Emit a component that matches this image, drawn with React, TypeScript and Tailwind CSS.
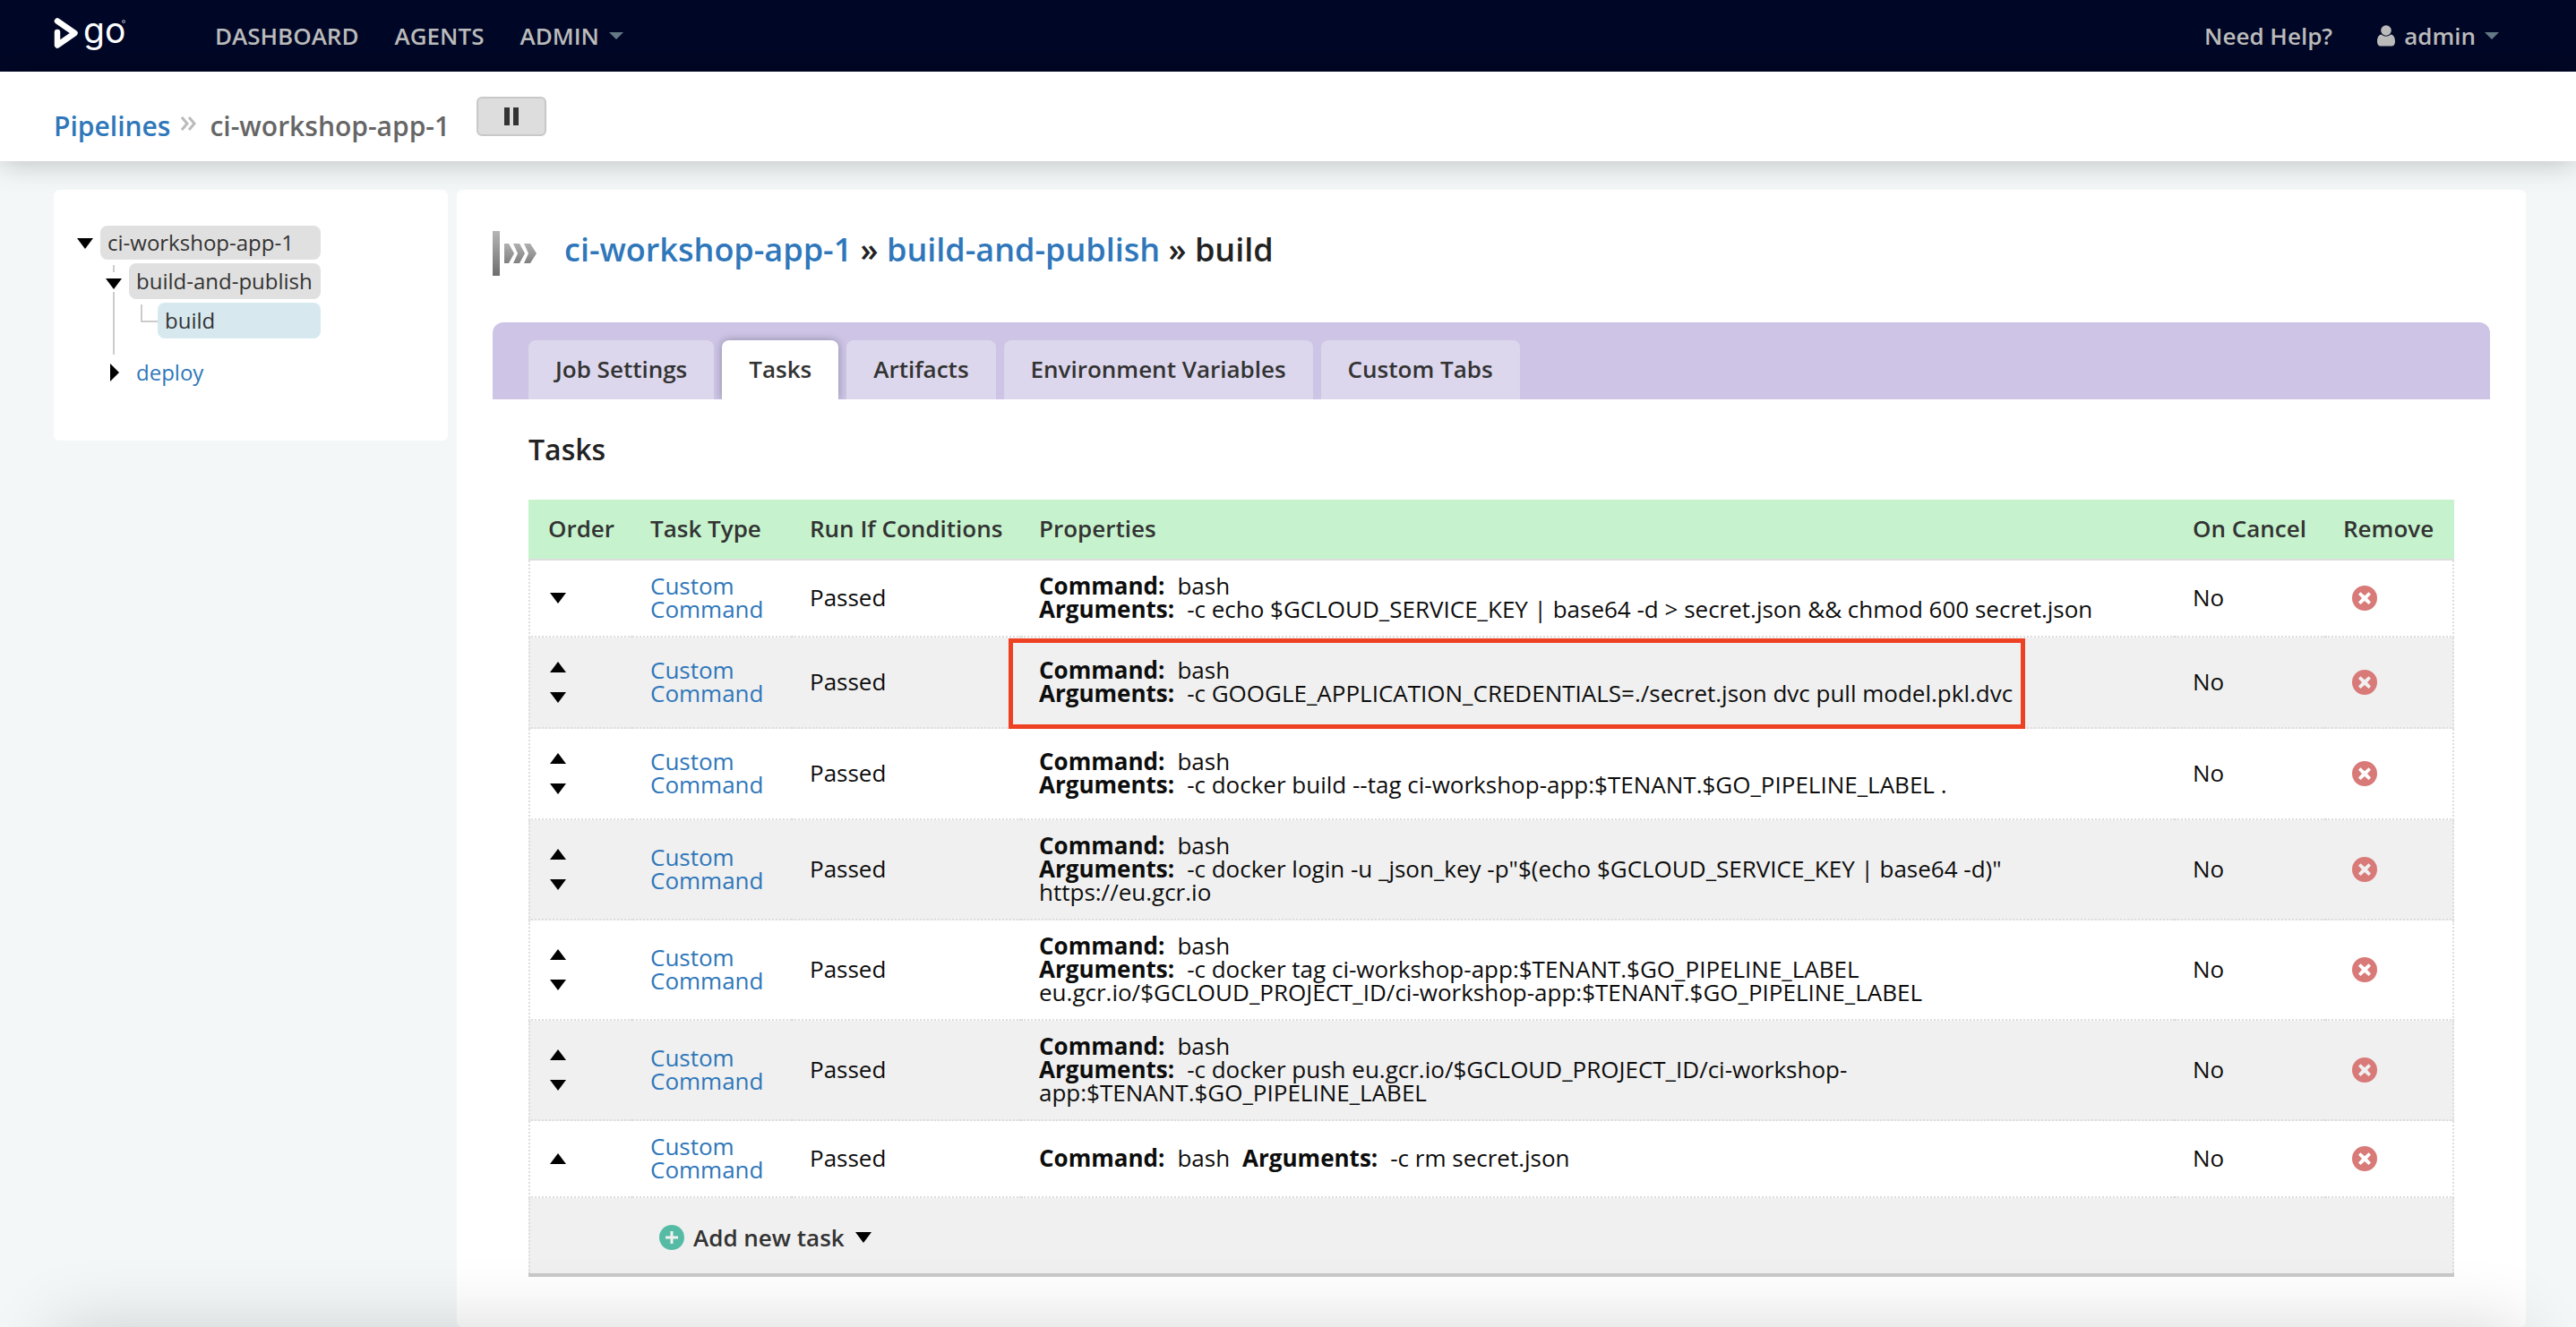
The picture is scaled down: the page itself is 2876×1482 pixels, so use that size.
import React from "react";

type Direction = "up" | "down" | "right";

const caretPoints: Record<Direction, string> = {
  up: "0,12 10,0 20,12",
  down: "0,0 20,0 10,12",
  right: "0,0 12,10 0,20",
};

function Caret({ dir, className }: { dir: Direction; className: string }) {
  return (
    <svg
      viewBox={dir === "right" ? "0 0 12 20" : "0 0 20 12"}
      preserveAspectRatio="none"
      className={className}
      fill="currentColor"
      aria-hidden="true"
    >
      <polygon points={caretPoints[dir]} />
    </svg>
  );
}

function Logo() {
  return (
    <svg viewBox="0 -8 84 60" className="h-[60px] w-[84px]" role="img" aria-label="go">
      <path
        d="M4 5.500 L23.500 19 L4 32.500 V18"
        fill="none"
        stroke="#fff"
        strokeWidth="6.500"
        strokeLinecap="round"
        strokeLinejoin="round"
      />
      <text x="33" y="30" fill="#fff" fontSize="39" fontWeight="400" fontFamily="Inter, sans-serif">
        go
      </text>
      <circle cx="78" cy="6" r="1.5" fill="none" stroke="#aab" strokeWidth="1" />
    </svg>
  );
}

function UserIcon() {
  return (
    <svg viewBox="0 0 20 24" className="h-6 w-5" fill="currentColor" aria-hidden="true">
      <circle cx="10" cy="6" r="5.8" />
      <path d="M5 10.5 C7.5 13.2 12.5 13.2 15 10.5 C18.5 11 20 14 20 18.500 C20 21.500 18.500 23.500 16 23.500 H4 C1.500 23.500 0 21.500 0 18.500 C0 14 1.500 11 5 10.500 Z" />
    </svg>
  );
}

function JobIcon() {
  return (
    <svg viewBox="0 0 50 52" className="h-[52px] w-[50px]" aria-hidden="true">
      <defs>
        <linearGradient id="jobBar" x1="0" y1="0" x2="0" y2="1">
          <stop offset="0" stopColor="#b5b5b5" />
          <stop offset="1" stopColor="#6e6e6e" />
        </linearGradient>
        <linearGradient id="jobArrow" x1="0" y1="0" x2="0" y2="1">
          <stop offset="0" stopColor="#b0b0b0" />
          <stop offset="1" stopColor="#808080" />
        </linearGradient>
      </defs>
      <rect x="0" y="1" width="8" height="50" fill="url(#jobBar)" />
      <g fill="url(#jobArrow)">
        <path d="M13 15 H18 L24 26 L18 37 H13 Z" />
        <path d="M23 15 H30 L36 26 L30 37 H23 L28 26 Z" />
        <path d="M35 15 H42 L49 26 L42 37 H35 L40 26 Z" />
      </g>
    </svg>
  );
}

function RemoveIcon() {
  return (
    <svg viewBox="0 0 28 28" className="h-7 w-7" aria-hidden="true">
      <path
        fill="#d87a78"
        fillRule="evenodd"
        d="M14 0a14 14 0 1 0 0 28a14 14 0 1 0 0-28ZM9.500 7.200L14 11.200L18.500 7.200L21 9.700L17 14L21 18.500L18.500 21L14 17L9.500 21L7 18.500L11 14L7 9.700Z"
      />
    </svg>
  );
}

function AddIcon() {
  return (
    <svg viewBox="0 0 28 28" className="h-7 w-7" aria-hidden="true">
      <circle cx="14" cy="14" r="14" fill="#56bba4" />
      <path d="M14 7 V21 M7 14 H21" stroke="#f0f0f0" strokeWidth="3" fill="none" />
    </svg>
  );
}

interface Task {
  up: boolean;
  down: boolean;
  args: string;
  inline?: boolean;
  highlight?: boolean;
}

const tasks: Task[] = [
  {
    up: false,
    down: true,
    args: "-c echo $GCLOUD_SERVICE_KEY | base64 -d > secret.json && chmod 600 secret.json",
  },
  {
    up: true,
    down: true,
    args: "-c GOOGLE_APPLICATION_CREDENTIALS=./secret.json dvc pull model.pkl.dvc",
    highlight: true,
  },
  {
    up: true,
    down: true,
    args: "-c docker build --tag ci-workshop-app:$TENANT.$GO_PIPELINE_LABEL .",
  },
  {
    up: true,
    down: true,
    args: '-c docker login -u _json_key -p"$(echo $GCLOUD_SERVICE_KEY | base64 -d)" https://eu.gcr.io',
  },
  {
    up: true,
    down: true,
    args: "-c docker tag ci-workshop-app:$TENANT.$GO_PIPELINE_LABEL eu.gcr.io/$GCLOUD_PROJECT_ID/ci-workshop-app:$TENANT.$GO_PIPELINE_LABEL",
  },
  {
    up: true,
    down: true,
    args: "-c docker push eu.gcr.io/$GCLOUD_PROJECT_ID/ci-workshop-app:$TENANT.$GO_PIPELINE_LABEL",
  },
  { up: true, down: false, args: "-c rm secret.json", inline: true },
];

const tabs = ["Job Settings", "Tasks", "Artifacts", "Environment Variables", "Custom Tabs"];

function OrderButton({ dir }: { dir: "up" | "down" }) {
  return (
    <button type="button" aria-label={`Move ${dir}`} className="flex h-[34px] items-center text-black">
      <Caret dir={dir} className="h-3 w-[18px]" />
    </button>
  );
}

function TaskRow({ task }: { task: Task }) {
  const cell = "border-b-2 border-dotted border-[#ddd] px-5 align-middle";
  const text = "pt-[15px] pb-[17px]";
  return (
    <tr className="odd:bg-white even:bg-[#f0f0f0]">
      <td className={`${cell} border-l-2 py-4 pl-[22px]`}>
        {task.up && <OrderButton dir="up" />}
        {task.down && <OrderButton dir="down" />}
      </td>
      <td className={`${cell} ${text}`}>
        <a href="#task" className="text-[#2f77ba]">
          Custom Command
        </a>
      </td>
      <td className={`${cell} ${text}`}>Passed</td>
      <td className={`${cell} ${text}`}>
        <div className="relative w-fit">
          <ul className={task.inline ? "flex gap-3.5" : "block"}>
            <li>
              <strong className="mr-3.5 font-bold">Command:</strong>bash
            </li>
            <li>
              <strong className="mr-3.5 font-bold">Arguments:</strong>
              {task.args}
            </li>
          </ul>
          {task.highlight && (
            <div className="pointer-events-none absolute -top-[22px] -right-3.5 -bottom-[27px] -left-[34px] border-[5px] border-[#ee4023]" />
          )}
        </div>
      </td>
      <td className={`${cell} ${text}`}>No</td>
      <td className={`${cell} border-r-2 py-4`}>
        <button type="button" aria-label="Remove task" className="block pl-[10px]">
          <RemoveIcon />
        </button>
      </td>
    </tr>
  );
}

export default function App() {
  return (
    <div className="flex min-h-screen flex-col overflow-hidden bg-[#f3f7f8] font-['Open_Sans',sans-serif] text-[26px] leading-[26px] text-[#0d0d0d]">
      <header className="flex h-20 items-center justify-between bg-[#000726] pr-[86px] pl-[60px] font-semibold text-[#bbb]">
        <div className="flex items-center">
          <a href="#home" className="mr-24">
            <Logo />
          </a>
          <nav className="flex items-center gap-10">
            <a href="#dashboard">DASHBOARD</a>
            <a href="#agents">AGENTS</a>
            <button type="button" className="flex items-center gap-[11px]">
              ADMIN <Caret dir="down" className="h-2 w-4 text-[#647984]" />
            </button>
          </nav>
        </div>
        <div className="flex items-center gap-[50px]">
          <a href="#help">Need Help?</a>
          <button type="button" className="flex items-center gap-2.5">
            <UserIcon /> admin <Caret dir="down" className="h-2 w-4 text-[#647984]" />
          </button>
        </div>
      </header>

      <div className="z-10 flex h-[100px] items-start bg-white px-[60px] pt-7 shadow-[0_0_32px_rgba(0,0,0,0.25)]">
        <div className="flex items-center pt-[11px] text-[30px] leading-[44px] font-semibold text-[#666]">
          <a href="#pipelines" className="text-[#2f77ba]">
            Pipelines
          </a>
          <svg viewBox="0 0 18 16" className="mx-3 mb-1.5 h-4 w-[18px]" fill="none" stroke="#bbb" strokeWidth="3" aria-hidden="true">
            <path d="M1 1 L7 8 L1 15 M9 1 L15 8 L9 15" />
          </svg>
          <span className="ml-0.5">ci-workshop-app-1</span>
        </div>
        <button
          type="button"
          aria-label="Pause"
          className="ml-[30px] flex h-11 w-[78px] items-center justify-center gap-1 rounded-md border-2 border-[#c8c8c8] bg-[#ddd]"
        >
          <span className="h-5 w-1.5 bg-[#333]" />
          <span className="h-5 w-1.5 bg-[#333]" />
        </button>
      </div>

      <div className="flex flex-1 items-start gap-2.5 pt-8 pr-14 pl-[60px]">
        <aside className="h-[280px] w-[440px] shrink-0 rounded-md bg-white pt-10 pl-5 text-2xl">
          <div className="flex w-[278px]">
            <button type="button" aria-label="Collapse pipeline" className="flex h-10 w-8 shrink-0 items-center justify-center pr-0.5 text-black">
              <Caret dir="down" className="h-3 w-[18px]" />
            </button>
            <div className="flex-1">
              <a href="#pipeline" className="flex h-[38px] items-center rounded-lg bg-[#e0e0e0] pl-2 text-[#333]">
                ci-workshop-app-1
              </a>
              <ul className="pt-1">
                <li className="flex">
                  <div className="flex w-8 shrink-0 flex-col items-center pt-0.5 pr-0.5">
                    <span className="h-2 w-0.5 bg-[#ccc]" />
                    <button type="button" aria-label="Collapse stage" className="flex h-[22px] items-center pt-1 text-black">
                      <Caret dir="down" className="h-3 w-[18px]" />
                    </button>
                    <span className="h-[70px] w-0.5 bg-[#ccc]" />
                  </div>
                  <div className="flex-1">
                    <a href="#stage" className="flex h-10 items-center rounded-lg bg-[#e0e0e0] pl-2 text-[#333]">
                      build-and-publish
                    </a>
                    <div className="flex pt-1">
                      <span className="mt-0.5 ml-[13px] h-5 w-[19px] border-b-2 border-l-2 border-[#ccc]" />
                      <a href="#job" className="flex h-10 flex-1 items-center rounded-lg bg-[#d7e9ef] pl-2 text-[#333]">
                        build
                      </a>
                    </div>
                  </div>
                </li>
                <li className="flex">
                  <button type="button" aria-label="Expand stage" className="flex h-10 w-8 items-center justify-center text-black">
                    <Caret dir="right" className="h-5 w-2.5" />
                  </button>
                  <a href="#deploy" className="flex h-10 items-center pl-2 text-[#2f77ba]">
                    deploy
                  </a>
                </li>
              </ul>
            </div>
          </div>
        </aside>

        <main className="min-w-0 flex-1 self-stretch rounded-md bg-white px-10 pb-14">
          <h1 className="flex h-[148px] items-start pt-[45px] text-4xl leading-[44px] font-semibold text-[#222]">
            <span className="mr-[30px]">
              <JobIcon />
            </span>
            <span>
              <a href="#pipeline" className="text-[#2f77ba]">
                ci-workshop-app-1
              </a>{" "}
              »{" "}
              <a href="#stage" className="text-[#2f77ba]">
                build-and-publish
              </a>{" "}
              » build
            </span>
          </h1>

          <div role="tablist" className="flex gap-[9px] overflow-hidden rounded-t-xl bg-[#cdc4e6] px-10 pt-5">
            {tabs.map((tab) => {
              const active = tab === "Tasks";
              return (
                <button
                  key={tab}
                  type="button"
                  role="tab"
                  aria-selected={active}
                  className={
                    active
                      ? "h-[66px] rounded-t-lg bg-white px-[30px] pb-0.5 font-semibold text-[#333] shadow-[0_0_10px_rgba(0,0,0,0.3)]"
                      : "h-[66px] rounded-t-lg bg-[#dcd7ec] px-[30px] pb-0.5 font-semibold text-[#333]"
                  }
                >
                  {tab}
                </button>
              );
            })}
          </div>

          <section className="px-10 pt-9">
            <h2 className="mb-9 text-[32px] leading-10 font-semibold text-[#222]">Tasks</h2>
            <table className="w-full table-fixed border-separate border-spacing-0 border-b-4 border-[#c8c8c8]">
              <colgroup>
                <col className="w-[116px]" />
                <col className="w-[178px]" />
                <col className="w-[256px]" />
                <col />
                <col className="w-[168px]" />
                <col className="w-[144px]" />
              </colgroup>
              <thead>
                <tr className="h-[68px] bg-[#c6f3cd] text-left text-[#333]">
                  {["Order", "Task Type", "Run If Conditions", "Properties", "On Cancel", "Remove"].map((name) => (
                    <th key={name} scope="col" className="border-b-2 border-[#ddd] px-5 pb-0.5 font-semibold first:pl-[22px]">
                      {name}
                    </th>
                  ))}
                </tr>
              </thead>
              <tbody>
                {tasks.map((task) => (
                  <TaskRow key={task.args} task={task} />
                ))}
                <tr className="h-[84px] bg-[#f0f0f0]">
                  <td className="border-l-2 border-dotted border-[#ddd]" />
                  <td colSpan={5} className="border-r-2 border-dotted border-[#ddd] pt-1 pl-[30px]">
                    <button type="button" className="flex items-center font-semibold text-[#333]">
                      <AddIcon />
                      <span className="mr-3 ml-2.5">Add new task</span>
                      <Caret dir="down" className="h-3 w-[18px] text-black" />
                    </button>
                  </td>
                </tr>
              </tbody>
            </table>
          </section>
        </main>
      </div>

      <div className="pointer-events-none fixed -bottom-40 left-[60px] right-[60px] z-20 h-40 shadow-[0_0_80px_rgba(0,0,0,0.16)]" />
    </div>
  );
}
